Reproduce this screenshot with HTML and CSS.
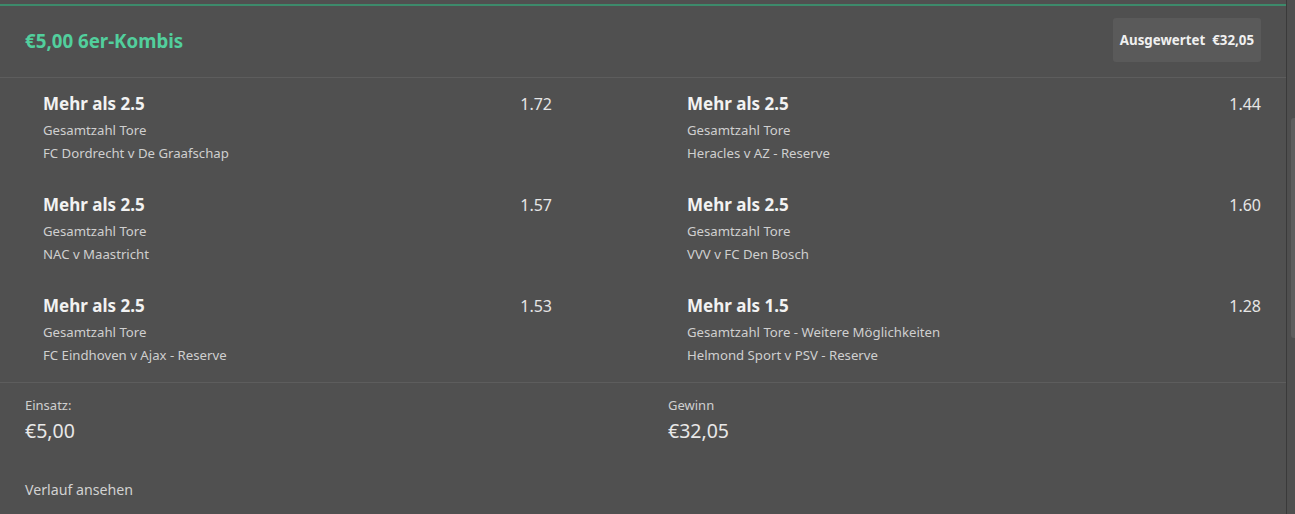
FILE: index.html
```html
<!DOCTYPE html>
<html lang="de">
<head>
<meta charset="utf-8">
<title>6er-Kombis</title>
<link rel="stylesheet" href="styles.css">
</head>
<body>
<div class="panel">
  <div class="topline"></div>
  <div class="header">
    <h1 class="title">€5,00 6er-Kombis</h1>
    <div class="badge"><span>Ausgewertet</span><span>€32,05</span></div>
  </div>
  <div class="selections">
    <div class="sel">
      <div class="sel-info">
        <div class="sel-name">Mehr als 2.5</div>
        <div class="sel-market">Gesamtzahl Tore</div>
        <div class="sel-event">FC Dordrecht v De Graafschap</div>
      </div>
      <div class="sel-odds">1.72</div>
    </div>
    <div class="sel">
      <div class="sel-info">
        <div class="sel-name">Mehr als 2.5</div>
        <div class="sel-market">Gesamtzahl Tore</div>
        <div class="sel-event">Heracles v AZ - Reserve</div>
      </div>
      <div class="sel-odds">1.44</div>
    </div>
    <div class="sel">
      <div class="sel-info">
        <div class="sel-name">Mehr als 2.5</div>
        <div class="sel-market">Gesamtzahl Tore</div>
        <div class="sel-event">NAC v Maastricht</div>
      </div>
      <div class="sel-odds">1.57</div>
    </div>
    <div class="sel">
      <div class="sel-info">
        <div class="sel-name">Mehr als 2.5</div>
        <div class="sel-market">Gesamtzahl Tore</div>
        <div class="sel-event">VVV v FC Den Bosch</div>
      </div>
      <div class="sel-odds">1.60</div>
    </div>
    <div class="sel">
      <div class="sel-info">
        <div class="sel-name">Mehr als 2.5</div>
        <div class="sel-market">Gesamtzahl Tore</div>
        <div class="sel-event">FC Eindhoven v Ajax - Reserve</div>
      </div>
      <div class="sel-odds">1.53</div>
    </div>
    <div class="sel">
      <div class="sel-info">
        <div class="sel-name">Mehr als 1.5</div>
        <div class="sel-market">Gesamtzahl Tore - Weitere Möglichkeiten</div>
        <div class="sel-event">Helmond Sport v PSV - Reserve</div>
      </div>
      <div class="sel-odds">1.28</div>
    </div>
  </div>
  <div class="footer">
    <div class="summary">
      <div class="sum-item">
        <div class="sum-label">Einsatz:</div>
        <div class="sum-value">€5,00</div>
      </div>
      <div class="sum-item">
        <div class="sum-label">Gewinn</div>
        <div class="sum-value">€32,05</div>
      </div>
    </div>
    <a class="history" href="#">Verlauf ansehen</a>
  </div>
</div>
<div class="scrollbar"><div class="thumb"></div></div>
</body>
</html>
```

FILE: styles.css
```css
* { box-sizing: border-box; }

html, body {
  margin: 0;
  padding: 0;
  height: 100%;
}

body {
  background: #505050;
  font-family: "Noto Sans", "Open Sans", "DejaVu Sans", sans-serif;
  color: #f0f0f0;
  display: flex;
  overflow: hidden;
}

.panel {
  flex: 1;
  padding-top: 4px;
}

.topline {
  height: 2px;
  background: #3d8a6b;
}

.header {
  height: 72px;
  display: flex;
  justify-content: space-between;
  align-items: flex-start;
  padding: 12px 25px 0 25px;
  border-bottom: 1px solid #5d5d5d;
}

.title {
  margin: 0;
  font-size: 18.7px;
  font-weight: 700;
  line-height: 24px;
  color: #52cf9d;
  padding-top: 11px;
}

.badge {
  height: 44px;
  background: #5a5a5a;
  border-radius: 3px;
  display: flex;
  align-items: center;
  gap: 7px;
  padding: 0 7px 0 7px;
  font-size: 13.3px;
  font-weight: 700;
  color: #f0f0f0;
}

.selections {
  display: grid;
  grid-template-columns: 509px 1fr;
  column-gap: 135px;
  row-gap: 27px;
  padding: 14px 25px 14px 43px;
  border-bottom: 1px solid #5d5d5d;
}

.sel {
  display: flex;
  justify-content: space-between;
  align-items: flex-start;
}

.sel-name {
  font-size: 17px;
  font-weight: 700;
  line-height: 24px;
  color: #f2f2f2;
}

.sel-market {
  font-size: 13.2px;
  line-height: 22px;
  padding-top: 3px;
  color: #cfcfcf;
}

.sel-event {
  font-size: 13.2px;
  line-height: 25px;
  color: #cfcfcf;
}

.sel-odds {
  font-size: 16px;
  line-height: 24px;
  color: #e6e6e6;
}

.footer {
  padding: 13px 25px 0 25px;
}

.summary {
  display: grid;
  grid-template-columns: 643px 1fr;
}

.sum-label {
  font-size: 13px;
  line-height: 18px;
  color: #cfcfcf;
}

.sum-value {
  margin-top: 4px;
  font-size: 19.5px;
  line-height: 26px;
  color: #e8e8e8;
}

.history {
  display: inline-block;
  margin-top: 36px;
  font-size: 14.2px;
  line-height: 20px;
  color: #d2d2d2;
  text-decoration: none;
}

.scrollbar {
  width: 9px;
  background: #4f4f4f;
  border-left: 1px solid #3a3a3a;
  padding-top: 118px;
  display: flex;
  justify-content: flex-end;
}

.thumb {
  width: 4px;
  height: 220px;
  background: #5e5e5e;
  border-radius: 3px 0 0 3px;
}
```
